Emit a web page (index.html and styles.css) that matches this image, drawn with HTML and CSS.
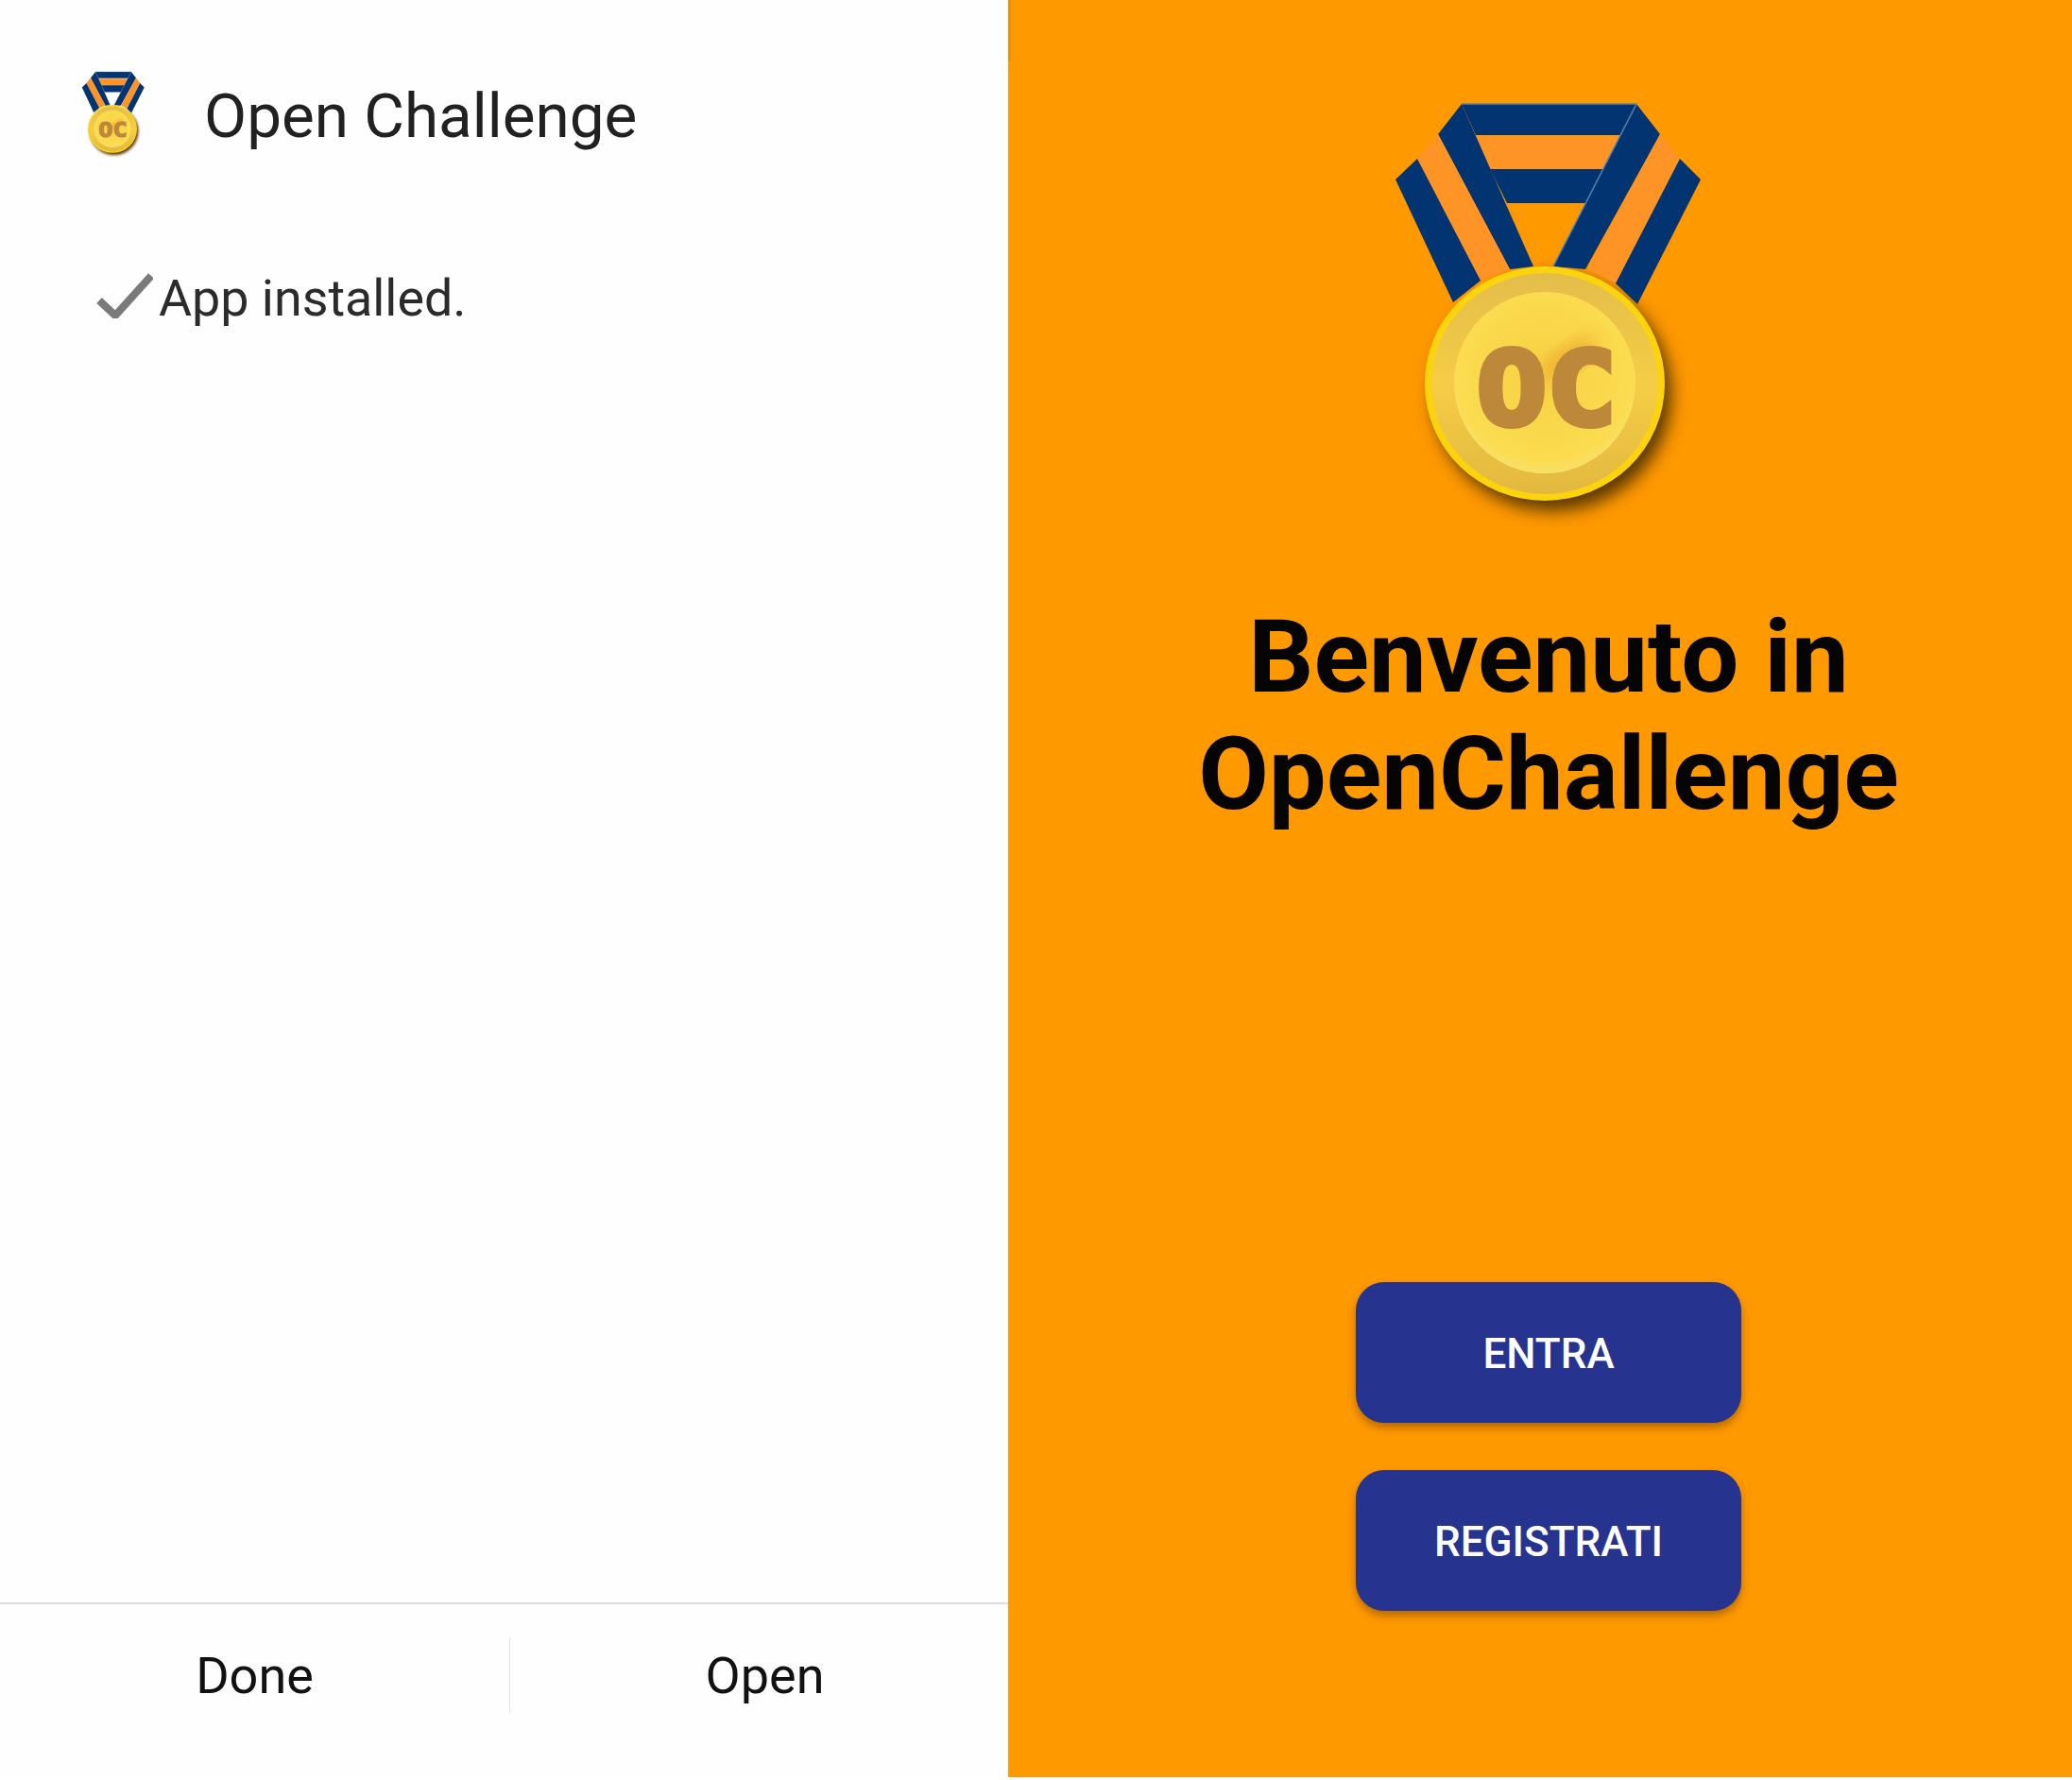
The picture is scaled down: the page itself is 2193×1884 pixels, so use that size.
FILE: index.html
```html
<html>
<head>
    <title>Open Challenge</title>
    <link rel="stylesheet" href="styles.css">
</head>
<body>
    <svg class="defs" width="0" height="0">
        <defs>
            <linearGradient id="rimGrad" x1="0" y1="0" x2="0" y2="1">
                <stop offset="0" stop-color="#e3bd4a"/>
                <stop offset="0.5" stop-color="#f5cd45"/>
                <stop offset="1" stop-color="#e2b93f"/>
            </linearGradient>
            <radialGradient id="faceGrad" cx="0.5" cy="0.45" r="0.6">
                <stop offset="0" stop-color="#f8cf42"/>
                <stop offset="0.8" stop-color="#fbdc50"/>
                <stop offset="1" stop-color="#f6e27a"/>
            </radialGradient>
            <filter id="soft" x="-30%" y="-30%" width="160%" height="160%">
                <feGaussianBlur stdDeviation="9"/>
            </filter>
            <symbol id="medal" viewBox="0 0 400 470">
                <ellipse class="m-shadow" cx="223" cy="327" rx="126" ry="124" filter="url(#soft)"/>
                <!-- ribbon -->
                <polygon class="m-blue" points="127,20 312,20 295,53 142,53"/>
                <polygon class="m-orange" points="142,55 293,55 277,89 157,89"/>
                <polygon class="m-blue" points="157,89 277,89 258,125 175,125"/>
                <polygon class="m-blue" points="127,20 203,192 178,195 102,52"/>
                <polygon class="m-orange" points="102,52 178,195 147,207 80,78"/>
                <polygon class="m-blue" points="80,78 147,207 118,230 57,100"/>
                <polygon class="m-blue" points="312,20 337,52 258,195 224,192"/>
                <polygon class="m-orange" points="337,52 358,78 290,210 260,195"/>
                <polygon class="m-blue" points="358,78 380,100 313,232 290,210"/>
                <polyline class="m-edge" points="127,20 312,20 224,192"/>
                <!-- coin -->
                <ellipse cx="215" cy="316" rx="127" ry="124" fill="#fbd40e"/>
                <ellipse cx="215" cy="316" rx="120" ry="117" fill="url(#rimGrad)"/>
                <circle cx="215" cy="315" r="96" fill="url(#faceGrad)"/>
                <ellipse class="m-smudge" cx="240" cy="290" rx="36" ry="12" transform="rotate(-35 240 290)" filter="url(#soft)"/>
                <text class="m-letters" x="143" y="359" textLength="148" lengthAdjust="spacingAndGlyphs">OC</text>
            </symbol>
        </defs>
    </svg>

    <div class="screens">
        <div class="installer">
            <div class="app-head">
                <svg class="app-icon"><use href="#medal"/></svg>
                <div class="app-name">Open Challenge</div>
            </div>
            <div class="status">
                <svg class="check" viewBox="0 0 60 48">
                    <path d="M3 29 L20 45 L58 3" fill="none" stroke="#7a7a7a" stroke-width="8"/>
                </svg>
                <div class="status-text">App installed.</div>
            </div>
            <div class="actions">
                <div class="action">Done</div>
                <div class="action-sep"></div>
                <div class="action">Open</div>
            </div>
        </div>

        <div class="welcome">
            <svg class="medal"><use href="#medal"/></svg>
            <h1>Benvenuto in<br>OpenChallenge</h1>
            <div class="btn-container">
                <div class="btn">ENTRA</div>
                <div class="btn">REGISTRATI</div>
            </div>
        </div>
    </div>
</body>
</html>
```

FILE: styles.css
```css
body {
    margin: 0;
    padding: 0;
    background: #fff;
    font-family: Roboto, "Liberation Sans", sans-serif;
}
.defs {
    position: absolute;
}
.screens {
    display: flex;
    width: 2193px;
    height: 1881px;
}

/* left screen */
.installer {
    width: 1067px;
    display: flex;
    flex-direction: column;
    background: #fefefe;
    overflow: hidden;
}
.app-head {
    display: flex;
    align-items: center;
    height: 120px;
    padding: 62px 0 0 75px;
}
.app-icon {
    width: 82px;
    height: 96px;
    margin-bottom: 5px;
}
.app-name {
    margin-left: 59px;
    font-size: 65.6px;
    color: #212121;
}
.status {
    display: flex;
    align-items: center;
    margin-top: 102px;
    padding-left: 102px;
}
.check {
    width: 60px;
    height: 48px;
    margin-bottom: 6px;
}
.status-text {
    margin-left: 6px;
    font-size: 53.8px;
    color: #2b2b2b;
}
.actions {
    margin-top: auto;
    display: flex;
    align-items: center;
    width: 1079px;
    height: 147px;
    padding-top: 2px;
    padding-bottom: 34px;
    border-top: 2px solid #dcdcdc;
}
.action {
    flex: 1;
    text-align: center;
    font-size: 54px;
    color: #111;
}
.action-sep {
    width: 1px;
    height: 79px;
    background: #e2e2e2;
}

/* right screen */
.welcome {
    position: relative;
    flex: 1;
    display: flex;
    flex-direction: column;
    align-items: center;
    padding-left: 18px;
    background: #ff9900;
}
.welcome::before {
    content: "";
    position: absolute;
    left: 0;
    top: 0;
    width: 3px;
    height: 65px;
    background: #ef8e0a;
}
.medal {
    width: 400px;
    height: 470px;
    margin-top: 90px;
    margin-right: 38px;
}
h1 {
    margin: 73px 0 0;
    font-size: 108.4px;
    line-height: 124px;
    font-weight: 700;
    text-align: center;
    color: #050505;
}
.btn-container {
    margin-top: auto;
    margin-bottom: 176px;
    display: flex;
    flex-direction: column;
    gap: 50px;
}
.btn {
    width: 408px;
    height: 147px;
    padding-top: 2px;
    border-radius: 30px;
    background: #26348f;
    color: #fff;
    font-size: 44px;
    font-weight: 500;
    display: flex;
    align-items: center;
    justify-content: center;
    box-shadow: 0 5px 8px rgba(90, 50, 0, 0.45);
}

/* medal parts */
.m-blue {
    fill: #033472;
}
.m-orange {
    fill: #ff9426;
}
.m-edge {
    fill: none;
    stroke: #5c7fa8;
    stroke-width: 1.5px;
}
.m-shadow {
    fill: #5a3800;
}
.m-smudge {
    fill: #eda72c;
    opacity: 0.8;
}
.m-letters {
    font-family: "DejaVu Sans Mono", Roboto, monospace;
    font-weight: 700;
    font-size: 108px;
    fill: #bd883a;
    stroke: #bd883a;
    stroke-width: 6px;
}
```
